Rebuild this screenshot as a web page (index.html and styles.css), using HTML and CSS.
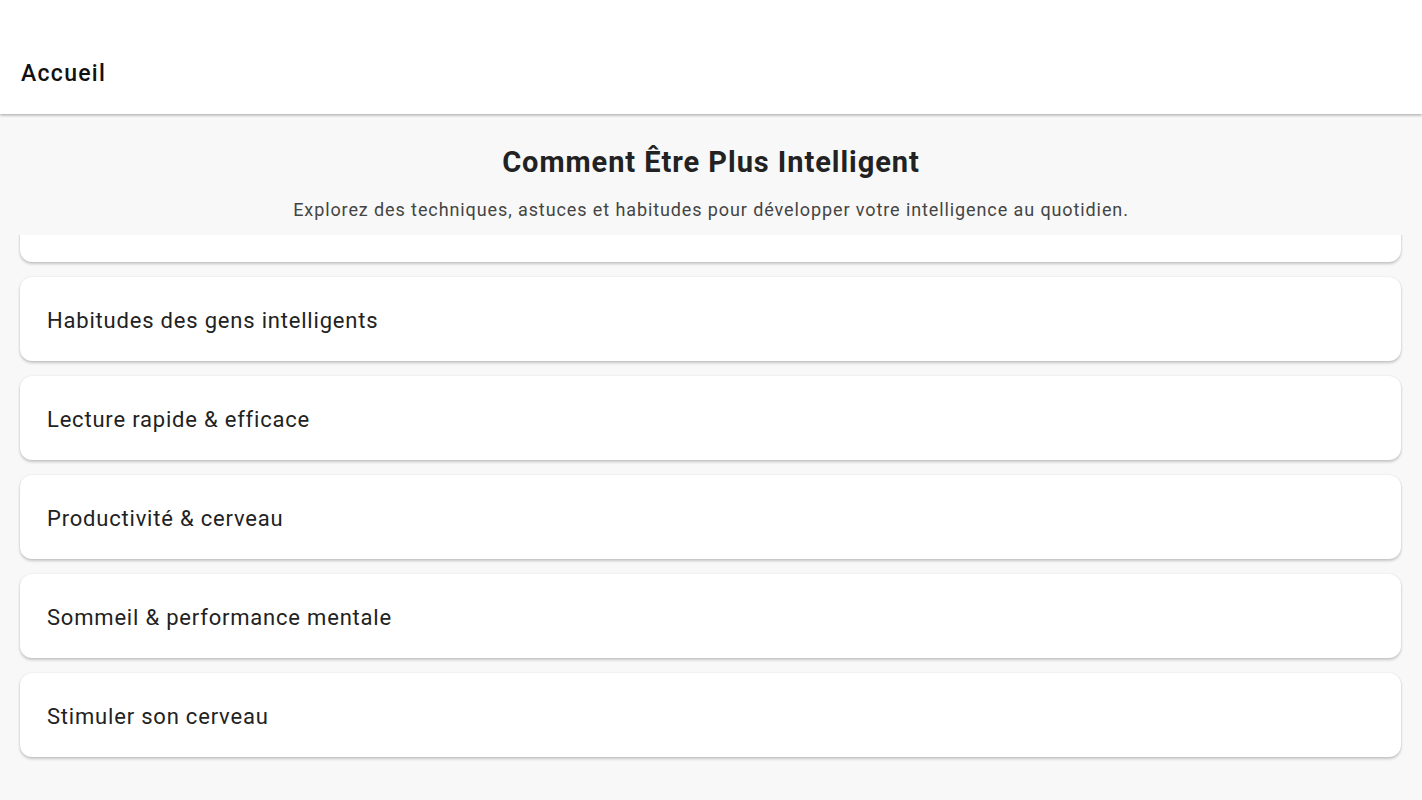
FILE: index.html
```html
<!DOCTYPE html>
<html lang="fr">
<head>
<meta charset="utf-8">
<title>Accueil</title>
<link rel="stylesheet" href="styles.css">
</head>
<body>
<div class="app">
  <header class="toolbar">
    <h1 class="toolbar-title">Accueil</h1>
  </header>
  <main class="content">
    <section class="intro">
      <h2 class="intro-title">Comment Être Plus Intelligent</h2>
      <p class="intro-sub">Explorez des techniques, astuces et habitudes pour développer votre intelligence au quotidien.</p>
    </section>
    <div class="list-viewport">
      <ul class="list">
        <li class="card">Techniques de mémorisation</li>
        <li class="card">Habitudes des gens intelligents</li>
        <li class="card">Lecture rapide &amp; efficace</li>
        <li class="card">Productivité &amp; cerveau</li>
        <li class="card">Sommeil &amp; performance mentale</li>
        <li class="card">Stimuler son cerveau</li>
      </ul>
    </div>
  </main>
</div>
</body>
</html>
```

FILE: styles.css
```css
* { box-sizing: border-box; }
html, body {
  margin: 0;
  padding: 0;
  height: 100%;
}
body {
  font-family: Roboto, "Liberation Sans", sans-serif;
  background: #f8f8f8;
  color: #222;
  overflow: hidden;
}
.app {
  display: flex;
  flex-direction: column;
  height: 800px;
}
.toolbar {
  position: relative;
  z-index: 2;
  flex: 0 0 114px;
  background: #fff;
  display: flex;
  align-items: flex-end;
  padding: 0 21px 26px;
  box-shadow: 0 1px 3px rgba(0,0,0,0.25), 0 2px 2px rgba(0,0,0,0.08);
}
.toolbar-title {
  margin: 0;
  font-size: 23px;
  font-weight: 500;
  color: #111;
  line-height: 28px;
  letter-spacing: 1.3px;
}
.content {
  flex: 1;
  display: flex;
  flex-direction: column;
  min-height: 0;
}
.intro {
  text-align: center;
  padding: 30px 20px 0;
  flex: 0 0 auto;
  height: 121px;
}
.intro-title {
  margin: 0;
  font-size: 29px;
  font-weight: 700;
  color: #222;
  line-height: 36px;
  letter-spacing: 0.95px;
}
.intro-sub {
  margin: 19px 0 0;
  font-size: 18px;
  color: #444;
  line-height: 22px;
  letter-spacing: 0.9px;
}
.list-viewport {
  flex: 1;
  min-height: 0;
  overflow: hidden;
  display: flex;
  flex-direction: column;
  justify-content: flex-end;
  padding: 0 21px 43px 20px;
}
.list {
  list-style: none;
  margin: 0;
  padding: 0;
  display: flex;
  flex-direction: column;
  gap: 15px;
}
.card {
  height: 84px;
  background: #fff;
  border-radius: 12px;
  display: flex;
  align-items: center;
  padding: 3px 27px 0;
  font-size: 22px;
  color: #222;
  letter-spacing: 0.8px;
  box-shadow: 0 2px 3px rgba(0,0,0,0.2), 0 0 2px rgba(0,0,0,0.1);
}
```
